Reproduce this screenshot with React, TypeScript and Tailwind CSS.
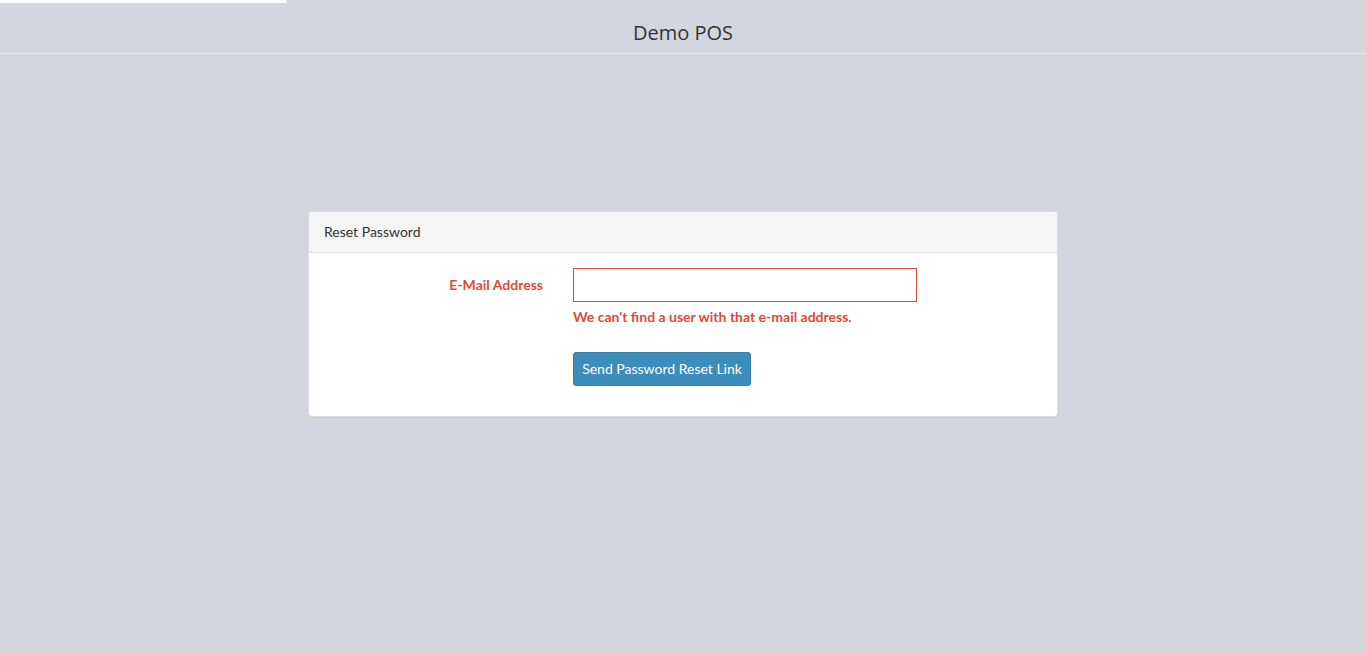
export default function App() {
  return (
    <div
      className="relative min-h-[654px] bg-[#d2d6de] text-[14px] text-[#333]"
      style={{ fontFamily: "Lato, 'Open Sans', sans-serif" }}
    >
      {/* page loader bar */}
      <div className="absolute left-0 top-0 h-[3px] w-[286px] bg-white" />

      <header className="h-[54px] border-b border-[#e8eaee] pt-[22px] text-center">
        <h1 className="text-[20px] leading-[22px] text-[#333]" style={{ fontFamily: "'Open Sans', sans-serif" }}>
          Demo POS
        </h1>
      </header>

      <div className="flex justify-center pt-[157px]">
        <div className="w-[750px] rounded-[4px] border border-[#ddd] bg-white shadow-[0_1px_1px_rgba(0,0,0,0.05)]">
          <div className="h-[41px] rounded-t-[4px] border-b border-[#ddd] bg-[#f5f5f5] px-[15px] pt-[10px] text-[14px] leading-[20px] text-[#333]">
            Reset Password
          </div>

          <div className="py-[15px]">
            <form className="flex flex-col">
              <div className="mb-[15px] flex">
                <label className="w-[249px] pr-[15px] pt-[7px] text-right text-[14px] font-bold leading-[20px] text-[#dd4b39]">
                  E-Mail Address
                </label>
                <div className="w-[374px] px-[15px]">
                  <input
                    type="email"
                    className="block h-[34px] w-full border border-[#dd4b39] bg-white px-[12px] py-[6px] outline-none"
                  />
                  <span className="mb-[10px] mt-[5px] block text-[14px] font-bold leading-[20px] text-[#dd4b39]">
                    We can't find a user with that e-mail address.
                  </span>
                </div>
              </div>

              <div className="mb-[15px] flex">
                <div className="ml-[249px] px-[15px]">
                  <button
                    type="button"
                    className="h-[34px] w-[178px] rounded-[3px] border border-[#367fa9] bg-[#3c8dbc] text-[14px] leading-[20px] text-white"
                  >
                    Send Password Reset Link
                  </button>
                </div>
              </div>
            </form>
          </div>
        </div>
      </div>
    </div>
  );
}
